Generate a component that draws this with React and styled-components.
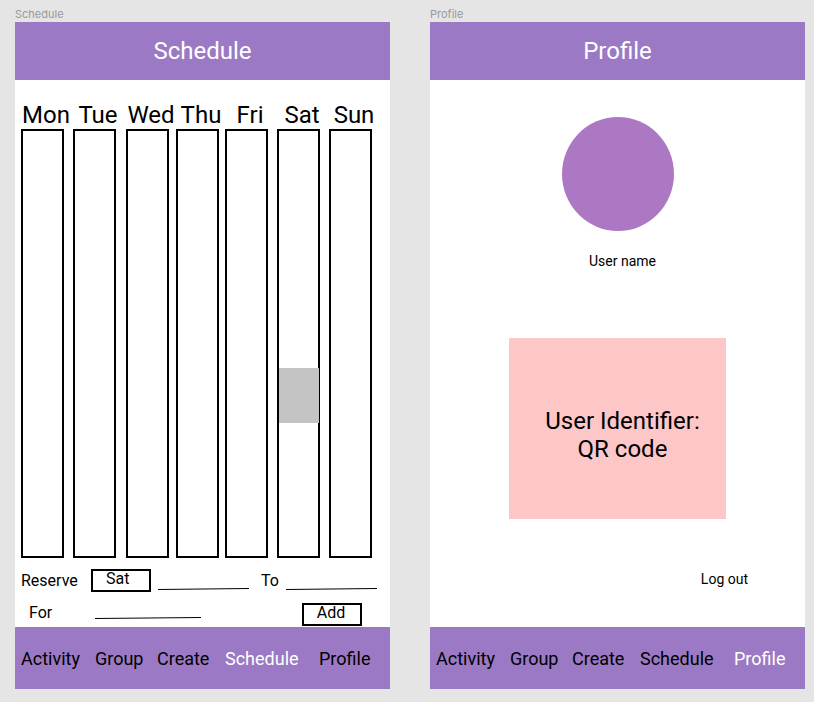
import React from "react";
import styled, { createGlobalStyle } from "styled-components";

const GlobalStyle = createGlobalStyle`
  *, *::before, *::after { box-sizing: border-box; }
  body { margin: 0; background: #e5e5e5; color: #000; font-family: Roboto, sans-serif; }
  button, input, select { font: inherit; color: inherit; }
`;

const Board = styled.main`
  display: grid;
  grid-template-columns: repeat(2, minmax(0, 1fr));
  gap: 40px;
  min-height: 100vh;
  padding: 0 9px 13px 15px;
`;

const Frame = styled.section`
  display: flex;
  flex-direction: column;
`;

const FrameLabel = styled.div`
  padding: 7px 0 1px;
  color: #999;
  font: 11px/14px Inter, sans-serif;
`;

const Screen = styled.div`
  display: flex;
  flex: 1;
  flex-direction: column;
  background: #fff;
`;

const TitleBar = styled.header`
  padding: 15px;
  background: #9b79c4;
  color: #fff;
  text-align: center;
`;

const Title = styled.h1`
  margin: 0;
  font-size: 24px;
  font-weight: 400;
  line-height: 28px;
`;

const TabBar = styled.nav`
  display: grid;
  grid-template-columns: 74fr 62fr 68fr 94fr 71fr;
  align-items: center;
  height: 62px;
  padding-left: 6px;
  background: #9b79c4;
`;

const Tab = styled.a`
  color: ${(p) => (p.$active ? "#fff" : "#000")};
  font-size: 18px;
  line-height: 21px;
  text-decoration: none;
`;

const ScheduleBody = styled.div`
  display: flex;
  flex: 1;
  flex-direction: column;
  gap: 11px;
  padding: 21px 0 1px 6px;
`;

const Week = styled.div`
  display: grid;
  flex: 1;
  grid-template-columns: 52fr 53fr 50fr 49fr 52fr 52fr 61fr;
`;

const Day = styled.div`
  display: flex;
  flex-direction: column;
  min-width: 0;
`;

const DayName = styled.div`
  display: flex;
  justify-content: center;
  width: 50px;
  font-size: 24px;
  line-height: 28px;
`;

const DayTrack = styled.div`
  position: relative;
  flex: 1;
  width: 43px;
  min-height: 240px;
  border: 2px solid #000;
`;

const Booking = styled.div`
  position: absolute;
  left: 0;
  right: -1px;
  background: #c4c4c4;
`;

const FormRow = styled.div`
  display: flex;
  align-items: ${(p) => p.$align || "center"};
  height: 23px;
  padding-right: 13px;
  font-size: 16px;
  line-height: 19px;
`;

const ReserveForm = styled.form`
  display: flex;
  flex-direction: column;
  gap: 11px;
`;

const FieldLabel = styled.label`
  flex: none;
  width: ${(p) => p.$width}px;
  padding-left: ${(p) => p.$indent || 0}px;
`;

const DaySelect = styled.select`
  appearance: none;
  flex: none;
  width: 60px;
  height: 23px;
  margin-right: 7px;
  padding: 0 0 4px 13px;
  border: 2px solid #000;
  border-radius: 0;
  background: #fff;
  line-height: 15px;
`;

const LineField = styled.span`
  display: flex;
  flex: ${(p) => (p.$width ? "none" : "1")};
  flex-direction: column;
  align-self: flex-start;
  width: ${(p) => (p.$width ? `${p.$width}px` : "auto")};
  height: ${(p) => p.$height}px;
  min-width: 0;
`;

const LineInput = styled.input`
  flex: 1;
  width: 100%;
  min-height: 0;
  padding: 0;
  border: 0;
  background: transparent;
  outline: none;
`;

const Stroke = styled.svg`
  display: block;
  width: 100%;
  height: 3px;
`;

const AddButton = styled.button`
  width: 60px;
  height: 23px;
  margin: 0 15px 0 auto;
  padding: 0 2px 4px 0;
  border: 2px solid #000;
  background: #fff;
  line-height: 15px;
`;

const ProfileBody = styled.div`
  display: flex;
  flex: 1;
  flex-direction: column;
  align-items: center;
  padding-top: 37px;
`;

const Avatar = styled.div`
  width: 112px;
  height: 114px;
  border-radius: 50%;
  background: #ac77c3;
`;

const UserName = styled.div`
  margin-top: 22px;
  padding-left: 10px;
  font-size: 14px;
  line-height: 16px;
`;

const CodeCard = styled.div`
  display: flex;
  align-items: center;
  justify-content: center;
  width: 217px;
  height: 181px;
  margin-top: 69px;
  padding: 13px 0 0 10px;
  background: #fdc7c7;
  font-size: 24px;
  line-height: 28px;
  text-align: center;
`;

const LogOut = styled.button`
  align-self: flex-end;
  margin: 52px 57px 0 0;
  padding: 0;
  border: 0;
  background: none;
  font-size: 14px;
  line-height: 16px;
`;

const TABS = ["Activity", "Group", "Create", "Schedule", "Profile"];

const DAYS = [
  { name: "Mon" },
  { name: "Tue" },
  { name: "Wed" },
  { name: "Thu" },
  { name: "Fri" },
  { name: "Sat", booking: { start: 237, length: 55 } },
  { name: "Sun" },
];

const DAY_LENGTH = 425;
const percent = (n) => `${(n / DAY_LENGTH) * 100}%`;

function AppFrame({ name, children }) {
  return (
    <Frame>
      <FrameLabel>{name}</FrameLabel>
      <Screen>
        <TitleBar>
          <Title>{name}</Title>
        </TitleBar>
        {children}
        <TabBar aria-label={`${name} tabs`}>
          {TABS.map((tab) => (
            <Tab key={tab} href={`#${tab.toLowerCase()}`} $active={tab === name}>
              {tab}
            </Tab>
          ))}
        </TabBar>
      </Screen>
    </Frame>
  );
}

function LinedInput({ id, label, width, height }) {
  return (
    <LineField $width={width} $height={height}>
      <LineInput id={id} aria-label={label} type="text" />
      <Stroke viewBox="0 0 100 3" preserveAspectRatio="none" aria-hidden="true">
        <line x1="0" y1="2.5" x2="100" y2="1.5" stroke="#000" vectorEffect="non-scaling-stroke" />
      </Stroke>
    </LineField>
  );
}

function Schedule() {
  return (
    <AppFrame name="Schedule">
      <ScheduleBody>
        <Week>
          {DAYS.map(({ name, booking }) => (
            <Day key={name}>
              <DayName>{name}</DayName>
              <DayTrack>
                {booking && (
                  <Booking style={{ top: percent(booking.start), height: percent(booking.length) }} />
                )}
              </DayTrack>
            </Day>
          ))}
        </Week>
        <ReserveForm onSubmit={(e) => e.preventDefault()}>
          <FormRow>
            <FieldLabel htmlFor="day" $width={70}>Reserve</FieldLabel>
            <DaySelect id="day" defaultValue="Sat">
              {DAYS.map(({ name }) => (
                <option key={name}>{name}</option>
              ))}
            </DaySelect>
            <LinedInput id="from" label="From" height={21} />
            <FieldLabel htmlFor="to" $width={37} $indent={12}>To</FieldLabel>
            <LinedInput id="to" height={21} />
          </FormRow>
          <FormRow $align="flex-start">
            <FieldLabel htmlFor="for" $width={74} $indent={8}>For</FieldLabel>
            <LinedInput id="for" width={106} height={16} />
            <AddButton type="submit">Add</AddButton>
          </FormRow>
        </ReserveForm>
      </ScheduleBody>
    </AppFrame>
  );
}

function Profile() {
  return (
    <AppFrame name="Profile">
      <ProfileBody>
        <Avatar />
        <UserName>User name</UserName>
        <CodeCard>
          User Identifier:
          <br />
          QR code
        </CodeCard>
        <LogOut type="button">Log out</LogOut>
      </ProfileBody>
    </AppFrame>
  );
}

export default function App() {
  return (
    <>
      <GlobalStyle />
      <Board>
        <Schedule />
        <Profile />
      </Board>
    </>
  );
}
